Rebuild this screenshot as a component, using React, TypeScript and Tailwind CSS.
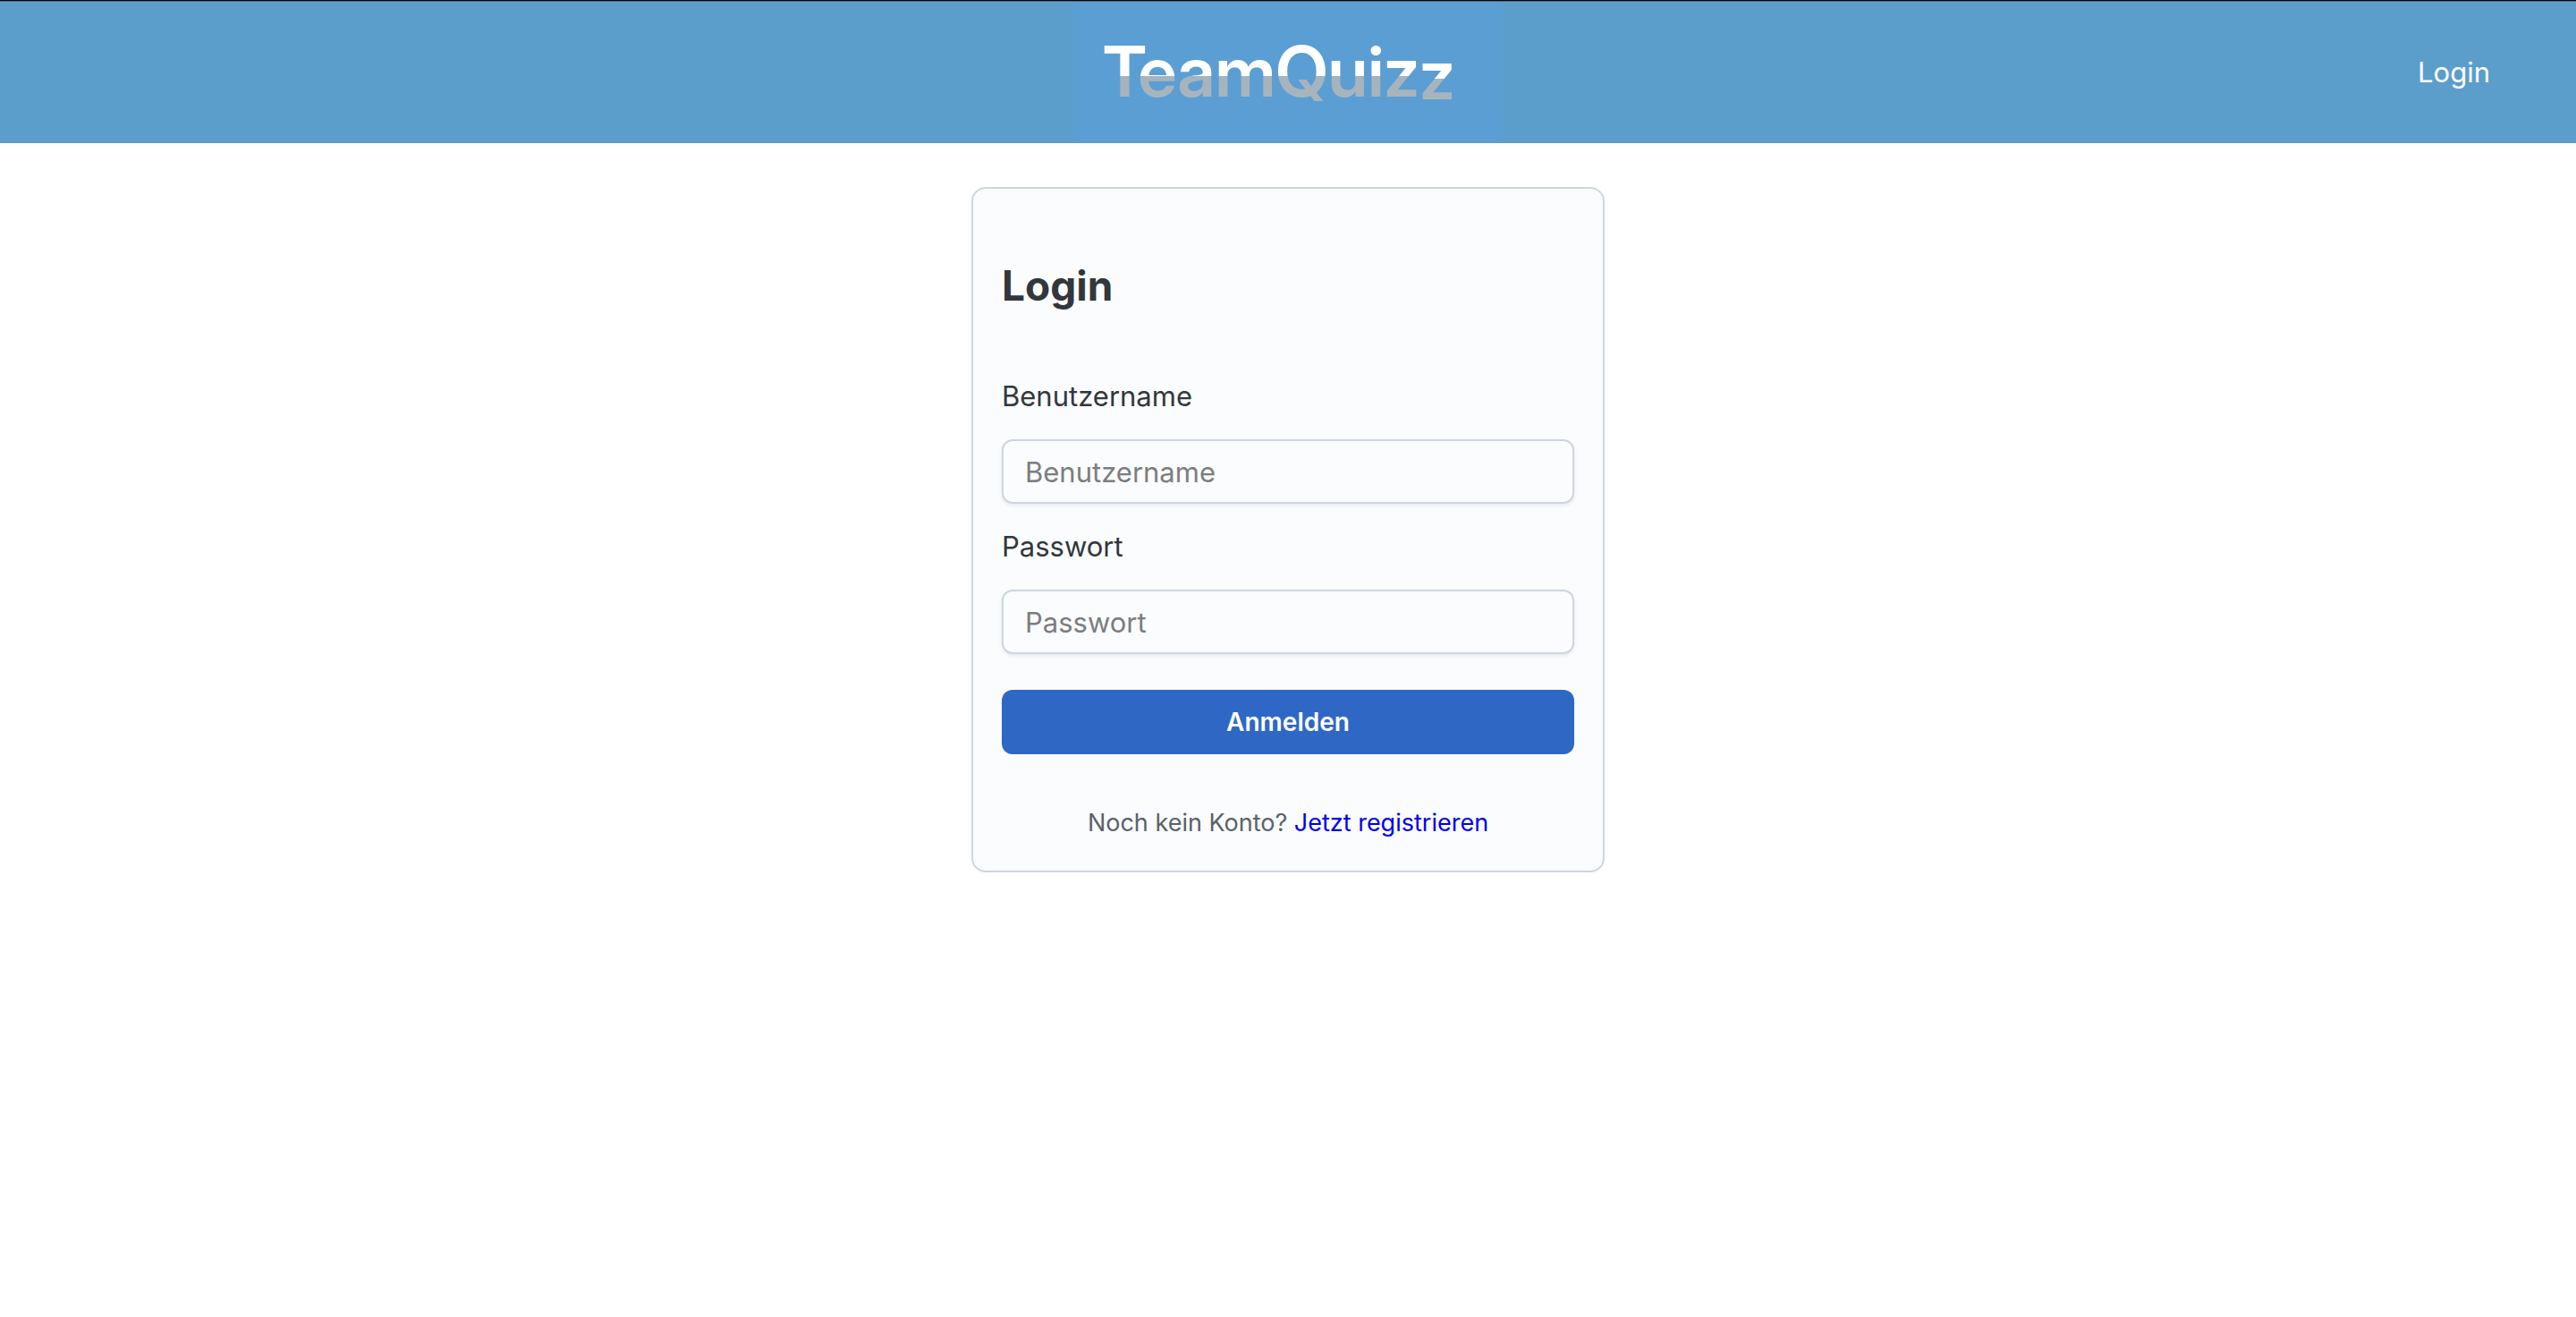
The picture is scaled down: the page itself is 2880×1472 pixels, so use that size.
import React from "react";

function Logo() {
  return (
    <svg viewBox="0 0 480 158" className="h-[158px] w-[480px]" role="img" aria-label="TeamQuizz">
      <defs>
        <linearGradient id="split" gradientUnits="userSpaceOnUse" x1="0" y1="0" x2="0" y2="158">
          <stop offset="0.525" stopColor="#ffffff" />
          <stop offset="0.525" stopColor="#a5b3bc" />
          <stop offset="1" stopColor="#b0b8bd" />
        </linearGradient>
        <linearGradient id="splitLow" gradientUnits="userSpaceOnUse" x1="0" y1="0" x2="0" y2="158">
          <stop offset="0.544" stopColor="#ffffff" />
          <stop offset="0.544" stopColor="#a5b3bc" />
          <stop offset="1" stopColor="#b0b8bd" />
        </linearGradient>
      </defs>
      <rect width="480" height="158" fill="#5b9ed4" />
      <text
        x="33"
        y="106"
        className="font-['Inter_Display','Inter',sans-serif] text-[78px] font-semibold [font-variation-settings:'opsz'_32]"
        fill="url(#split)"
      >
        TeamQuiz
        <tspan dy="3" fill="url(#splitLow)">z</tspan>
      </text>
    </svg>
  );
}

type FieldProps = { id: string; label: string; type: string };

function Field({ id, label, type }: FieldProps) {
  return (
    <div className="flex flex-col gap-6">
      <label htmlFor={id} className="text-[31px] leading-[48px]">
        {label}
      </label>
      <input
        id={id}
        type={type}
        placeholder={label}
        className="h-[72px] w-full rounded-xl border-2 border-[#cdd6e2] bg-[#fbfcfe] px-6 text-[31px] shadow-[0_2px_4px_rgba(0,0,0,0.08)] placeholder:text-[#7c7d80]"
      />
    </div>
  );
}

export default function App() {
  return (
    <div className="min-h-screen border-t border-black bg-white font-['Inter',sans-serif] text-[#32373c]">
      <header className="grid grid-cols-[1fr_auto_1fr] items-center border-t border-[#44708f] bg-[#5b9ecb]">
        <div />
        <a href="#">
          <Logo />
        </a>
        <nav className="flex justify-end pr-24">
          <a href="#login" className="text-[31px] leading-[48px] text-white">
            Login
          </a>
        </nav>
      </header>
      <main className="flex justify-center px-8 pt-[49px]">
        <form className="w-full max-w-[708px] rounded-2xl border-2 border-[#cdd6e0] bg-[#fbfcfe] p-8">
          <h2 className="mt-10 text-[46px] leading-[72px] font-bold">Login</h2>
          <div className="mt-16 flex flex-col gap-6">
            <Field id="username" label="Benutzername" type="text" />
            <Field id="password" label="Passwort" type="password" />
          </div>
          <button
            type="button"
            className="mt-10 h-[72px] w-full rounded-xl bg-[#2f68c4] text-[28px] font-semibold text-white"
          >
            Anmelden
          </button>
          <p className="mt-14 text-center text-[27px] leading-[42px] text-[#5a626b]">
            Noch kein Konto?{" "}
            <a href="#register" className="text-[#0000ee]">
              Jetzt registrieren
            </a>
          </p>
        </form>
      </main>
    </div>
  );
}
